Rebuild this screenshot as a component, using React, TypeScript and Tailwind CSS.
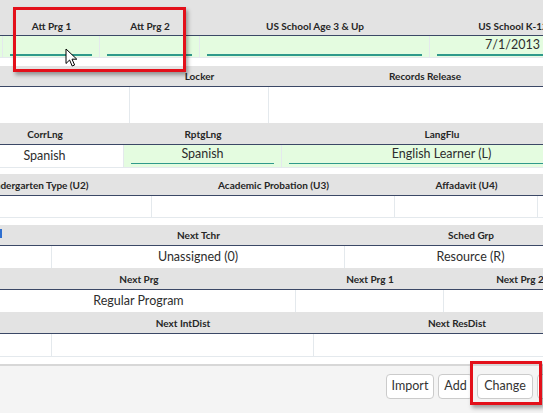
import React from 'react';

type ColProps = {
  w: string;
  h?: React.ReactNode;
  v?: string;
  green?: boolean;
  thick?: boolean;
  headCls: string;
  rowCls: string;
};

function Col({ w, h, v, green, thick, headCls, rowCls }: ColProps) {
  return (
    <div className={`${w} shrink-0 flex flex-col`}>
      <div
        className={`${headCls} bg-[#e3e3e3] border-b border-[#3b4866] flex justify-center text-[10px] leading-[14px] font-bold text-[#262626] whitespace-nowrap`}
      >
        {h}
      </div>
      <div
        className={`${rowCls} border-r border-[#e4e9ed] ${green ? 'bg-[#e4fce0] px-[7px]' : 'bg-white'} flex text-[12.5px] text-[#2d2d2d] whitespace-nowrap`}
      >
        {green ? (
          <div
            className={`flex-1 flex items-center justify-center border-[#2f9a8b] ${thick ? 'border-b-2 mb-[1px]' : 'border-b mb-[3px]'}`}
          >
            {v}
          </div>
        ) : (
          <div className="flex-1 flex items-center justify-center">{v}</div>
        )}
      </div>
    </div>
  );
}

const H21 = 'h-[21px] items-center';
const H22 = 'h-[22px] items-center';

const buttons = [
  { label: 'Import', w: 'w-[48px]' },
  { label: 'Add', w: 'w-[35px]' },
  { label: 'Change', w: 'w-[56px]' },
  { label: 'Delete', w: 'w-[52px]' },
];

export default function App() {
  return (
    <div className="relative w-[543px] h-[413px] overflow-hidden bg-white font-[Lato,sans-serif] flex flex-col">
      {/* Att programs */}
      <div className="flex ml-[-97px]">
        <Col w="w-[100px]" green headCls="h-[36px] items-end pb-[2px]" rowCls="h-[22px] border-b" />
        <Col w="w-[97px]" h="Att Prg 1" green thick headCls="h-[36px] items-end pb-[2px]" rowCls="h-[22px] border-b" />
        <Col w="w-[100px]" h="Att Prg 2" green thick headCls="h-[36px] items-end pb-[2px]" rowCls="h-[22px] border-b" />
        <Col w="w-[230px]" h="US School Age 3 & Up" green thick headCls="h-[36px] items-end pb-[2px]" rowCls="h-[22px] border-b" />
        <Col w="w-[166px]" h="US School K-12" v="7/1/2013" green thick headCls="h-[36px] items-end pb-[2px]" rowCls="h-[22px] border-b" />
      </div>

      {/* Locker / records */}
      <div className="flex mt-[8px]">
        <Col w="w-[130px]" headCls={H21} rowCls="h-[36px]" />
        <Col w="w-[139px]" h="Locker" headCls={H21} rowCls="h-[36px]" />
        <Col w="w-[312px]" h="Records Release" headCls={H21} rowCls="h-[36px]" />
      </div>

      {/* Languages */}
      <div className="flex ml-[-34px]">
        <Col w="w-[158px]" h="CorrLng" v="Spanish" headCls={H22} rowCls="h-[23px] border-b" />
        <Col w="w-[158px]" h="RptgLng" v="Spanish" green headCls={H22} rowCls="h-[23px] border-b" />
        <Col w="w-[320px]" h="LangFlu" v="English Learner (L)" green headCls={H22} rowCls="h-[23px] border-b" />
      </div>

      {/* U codes */}
      <div className="flex mt-[6px] ml-[-78px]">
        <Col w="w-[230px]" h="Kindergarten Type (U2)" headCls={H22} rowCls="h-[22px] border-b" />
        <Col w="w-[243px]" h="Academic Probation (U3)" headCls={H22} rowCls="h-[22px] border-b" />
        <Col w="w-[143px]" h="Affadavit (U4)" headCls={H22} rowCls="h-[22px] border-b" />
        <Col w="w-[150px]" headCls={H22} rowCls="h-[22px] border-b" />
      </div>

      {/* Next year */}
      <div className="flex mt-[7px]">
        <Col
          w="w-[52px]"
          h={<div className="w-[2px] h-[9px] bg-[#2f6fd0] mr-auto mb-[3px]" />}
          headCls={H21}
          rowCls="h-[22px]"
        />
        <Col w="w-[293px]" h="Next Tchr" v="Unassigned (0)" headCls={H21} rowCls="h-[22px]" />
        <Col w="w-[252px]" h="Sched Grp" v="Resource (R)" headCls={H21} rowCls="h-[22px]" />
      </div>
      <div className="flex ml-[-18px]">
        <Col w="w-[314px]" h="Next Prg" v="Regular Program" headCls={H22} rowCls="h-[22px]" />
        <Col w="w-[148px]" h="Next Prg 1" headCls={H22} rowCls="h-[22px]" />
        <Col w="w-[152px]" h="Next Prg 2" headCls={H22} rowCls="h-[22px]" />
      </div>
      <div className="flex">
        <Col w="w-[52px]" headCls={H22} rowCls="h-[23px] border-b" />
        <Col w="w-[262px]" h="Next IntDist" headCls={H22} rowCls="h-[23px] border-b" />
        <Col w="w-[286px]" h="Next ResDist" headCls={H22} rowCls="h-[23px] border-b" />
      </div>

      {/* Footer */}
      <div className="mt-[7px] flex-1 border-t-2 border-[#d7d7d7] bg-[#f4f4f4] pt-[8px] pl-[386px] flex gap-[4px] items-start">
        {buttons.map((b) => (
          <button
            key={b.label}
            className={`${b.w} shrink-0 h-[25px] bg-white border border-[#cbcbcb] rounded-[4px] text-[12.5px] text-[#333] leading-none flex items-center justify-center`}
          >
            {b.label}
          </button>
        ))}
      </div>

      {/* Highlights */}
      <div className="absolute left-[13px] top-[7px] w-[173px] h-[65px] border-[3px] border-[#e3101a] shadow-[2px_3px_4px_rgba(0,0,0,0.35)]" />
      <div className="absolute left-[470px] top-[361px] w-[72px] h-[44px] border-[3px] border-[#e3101a] shadow-[2px_3px_4px_rgba(0,0,0,0.35)]" />

      {/* Mouse cursor */}
      <svg className="absolute left-[65px] top-[48px]" width="13" height="20" viewBox="0 0 13 20">
        <path
          d="M1 1 L1 15.5 L4.6 12 L7.2 18 L9.6 17 L7 11.2 L11.8 11.2 Z"
          fill="#fff"
          stroke="#000"
          strokeWidth="1"
          strokeLinejoin="round"
        />
      </svg>
    </div>
  );
}
